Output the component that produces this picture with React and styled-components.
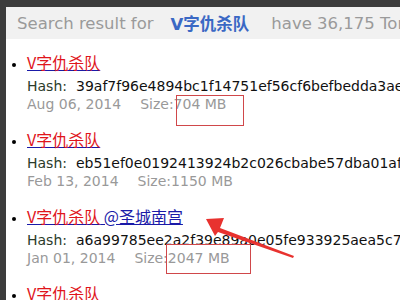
import React from 'react';
import styled, { createGlobalStyle } from 'styled-components';

const Global = createGlobalStyle`
  html, body {
    margin: 0;
    padding: 0;
    background: #3c3c3c;
    overflow: hidden;
  }
  body {
    font-family: "DejaVu Sans", Verdana, sans-serif;
  }
`;

const Page = styled.div`
  position: relative;
  margin: 7px 0 0 6px;
  height: 293px;
  background: #fff;
  overflow: hidden;
`;

const Header = styled.div`
  display: flex;
  align-items: center;
  height: 32px;
  padding-left: 11px;
  background: #f1f1f1;
  white-space: nowrap;
  font-size: 16.5px;
  color: #9a9a9a;
`;

const Keyword = styled.span`
  margin: 0 22px 0 17px;
  font-weight: bold;
  color: #3a68c4;
  font-family: "DejaVu Sans", "Noto Sans CJK SC", sans-serif;
`;

const List = styled.ul`
  margin: 11px 0 0;
  padding: 0 0 0 21px;
  list-style: disc;
`;

const Item = styled.li`
  margin-bottom: 14px;
  font-size: 16px;
  &::marker {
    color: #000;
    font-size: 14px;
  }
`;

const Title = styled.a`
  display: inline-block;
  height: 24px;
  line-height: 24px;
  color: #1a1aa8;
  text-decoration: underline;
  font-family: "Noto Sans CJK SC", "DejaVu Sans", sans-serif;
  font-size: 16px;
`;

const Hit = styled.span`
  color: #e0151b;
`;

const Hash = styled.div`
  margin-top: 3px;
  line-height: 18px;
  font-size: 14px;
  color: #111;
  white-space: nowrap;
`;

const Label = styled.span`
  margin-right: 9px;
  color: #2b3b2b;
`;

const Meta = styled.div`
  line-height: 18px;
  font-size: 14px;
  color: #999;
  white-space: nowrap;
`;

const Size = styled.span`
  margin-left: 19px;
`;

const Mark = styled.div`
  position: absolute;
  border: 1px solid #d0474a;
  box-sizing: border-box;
`;

const Arrow = styled.svg`
  position: absolute;
  left: 0;
  top: 0;
  pointer-events: none;
`;

const results = [
  { extra: '', hash: '39af7f96e4894bc1f14751ef56cf6befbedda3ae', date: 'Aug 06, 2014', size: '704 MB' },
  { extra: '', hash: 'eb51ef0e0192413924b2c026cbabe57dba01af', date: 'Feb 13, 2014', size: '1150 MB' },
  { extra: ' @圣城南宫', hash: 'a6a99785ee2a2f39e89a0e05fe933925aea5c7e', date: 'Jan 01, 2014', size: '2047 MB' },
  { extra: '', hash: '', date: '', size: '' },
];

const App = () => (
  <>
    <Global />
    <Page>
      <Header>
        Search result for<Keyword>V字仇杀队</Keyword>have 36,175 Torrents
      </Header>
      <List>
        {results.map((r, i) => (
          <Item key={i}>
            <Title href="#"><Hit>V字仇杀队</Hit>{r.extra}</Title>
            {r.hash && <Hash><Label>Hash:</Label>{r.hash}</Hash>}
            {r.date && <Meta>{r.date}<Size>Size:{r.size}</Size></Meta>}
          </Item>
        ))}
      </List>
      <Mark style={{ left: 170, top: 88, width: 68, height: 31 }} />
      <Mark style={{ left: 160, top: 237, width: 85, height: 30 }} />
      <Arrow width="394" height="293" viewBox="0 0 394 293">
        <polygon points="200,212 218,211 214,221 288,249 287,251 212,225 209,229" fill="#e8322f" />
      </Arrow>
    </Page>
  </>
);

export default App;
